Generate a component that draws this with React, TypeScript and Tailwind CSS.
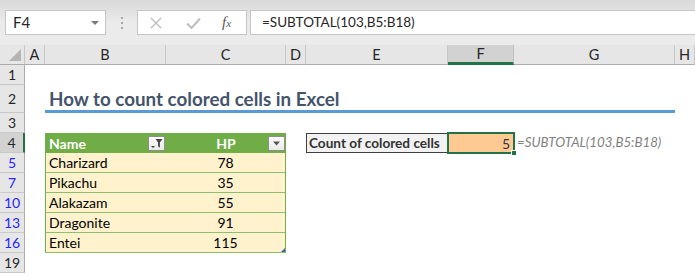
import clsx from 'clsx';

const ui = { fontFamily: 'Lato, "Liberation Sans", sans-serif' };
const cell = { fontFamily: 'Lato, "Liberation Sans", sans-serif' };

const pokemon = [
  { row: 5, name: 'Charizard', hp: 78 },
  { row: 7, name: 'Pikachu', hp: 35 },
  { row: 10, name: 'Alakazam', hp: 55 },
  { row: 13, name: 'Dragonite', hp: 91 },
  { row: 16, name: 'Entei', hp: 115 },
];

function RowHead({ n, blue, active }: { n: number; blue?: boolean; active?: boolean }) {
  return (
    <div
      className={clsx(
        'w-[25px] shrink-0 flex items-center justify-center border-b border-b-[#c9c9c9] text-[14px]',
        active ? 'bg-[#d2d2d2] border-r-2 border-r-[#217346]' : 'bg-[#e6e6e6] border-r border-r-[#ababab]',
        blue ? 'text-[#2525ff]' : 'text-[#262626]'
      )}
    >
      {n}
    </div>
  );
}

function ColHead({ label, width, active }: { label: string; width: string; active?: boolean }) {
  return (
    <div
      className={clsx(
        width,
        'shrink-0 flex items-center justify-center text-[14.5px] text-[#262626]',
        active
          ? 'bg-[#d2d2d2] border-b-[3px] border-b-[#217346] border-r border-r-[#c0c0c0]'
          : 'bg-[#e6e6e6] border-b border-b-[#ababab] border-r border-r-[#c6c6c6]'
      )}
    >
      {label}
    </div>
  );
}

function FilterButton({ filtered }: { filtered?: boolean }) {
  return (
    <div className="w-[17px] h-[15px] bg-gradient-to-b from-white to-[#e8e8e8] border border-[#8e8e8e] flex items-center justify-center">
      {filtered ? (
        <svg width="13" height="11" viewBox="0 0 13 11">
          <path d="M1 8h4l-2 2z" fill="#444" />
          <path d="M5.5 1h7l-2.6 3.4v5.2l-1.8 -1v-4.2z" fill="#444" />
        </svg>
      ) : (
        <svg width="9" height="5" viewBox="0 0 9 5">
          <path d="M1 0.5h7l-3.5 4z" fill="#555" />
        </svg>
      )}
    </div>
  );
}

export default function App() {
  return (
    <div className="w-[695px] h-[274px] bg-white overflow-hidden select-none">
      {/* formula bar */}
      <div className="h-[45px] bg-gradient-to-b from-[#d9d9d9] via-[#ebebeb] to-[#ebebeb] flex items-start pt-[10px] pl-[5px]" style={ui}>
        <div className="w-[101px] h-[25px] bg-white border border-[#c6c6c6] flex items-center justify-between pl-[7px] pr-[6px]">
          <span className="text-[15px] text-[#262626]">F4</span>
          <svg width="8" height="4" viewBox="0 0 8 4">
            <path d="M0 0h8l-4 4z" fill="#7a7a7a" />
          </svg>
        </div>
        <div className="w-[31px] h-[25px] flex flex-col items-center justify-center gap-[3px]">
          <span className="w-[2px] h-[2px] bg-[#a6a6a6]" />
          <span className="w-[2px] h-[2px] bg-[#a6a6a6]" />
          <span className="w-[2px] h-[2px] bg-[#a6a6a6]" />
        </div>
        <div className="w-[110px] h-[25px] bg-white border border-[#c6c6c6] flex items-center pl-[12px]">
          <svg width="12" height="12" viewBox="0 0 12 12">
            <path d="M1 1l10 10M11 1L1 11" stroke="#bdbdbd" strokeWidth="1.4" />
          </svg>
          <svg className="ml-[24px]" width="15" height="12" viewBox="0 0 15 12">
            <path d="M1 6.5l4.5 4.5L14 1.5" stroke="#bdbdbd" strokeWidth="2" fill="none" />
          </svg>
          <span className="ml-[21px] text-[15px] italic text-[#555]" style={{ fontFamily: '"Liberation Serif", serif' }}>
            f<span className="text-[11px]">x</span>
          </span>
        </div>
        <div className="w-[3px]" />
        <div className="flex-1 h-[25px] bg-white border border-[#c6c6c6] border-r-0 flex items-center pl-[11px]">
          <span className="text-[13.5px] text-[#262626]">=SUBTOTAL(103,B5:B18)</span>
        </div>
      </div>

      {/* column headers */}
      <div className="flex h-[20px]" style={cell}>
        <div className="w-[25px] shrink-0 bg-[#e6e6e6] border-b border-b-[#ababab] border-r border-r-[#c6c6c6] flex items-end justify-end p-[3px]">
          <svg width="12" height="12" viewBox="0 0 12 12">
            <path d="M12 0v12H0z" fill="#b4b4b4" />
          </svg>
        </div>
        <ColHead label="A" width="w-[20px]" />
        <ColHead label="B" width="w-[121px]" />
        <ColHead label="C" width="w-[120px]" />
        <ColHead label="D" width="w-[20px]" />
        <ColHead label="E" width="w-[142px]" />
        <ColHead label="F" width="w-[66px]" active />
        <ColHead label="G" width="w-[161px]" />
        <ColHead label="H" width="w-[20px]" />
      </div>

      <div style={cell} className="text-[14px] text-black">
        {/* row 1 */}
        <div className="flex h-[20px]">
          <RowHead n={1} />
        </div>

        {/* row 2: title */}
        <div className="flex h-[28px]">
          <RowHead n={2} />
          <div className="w-[20px] shrink-0" />
          <div className="w-[630px] shrink-0 border-b-[3px] border-b-[#5b9bd5] flex items-end pl-[4px] pb-[1px]">
            <span className="text-[18.8px] font-bold text-[#44546a] leading-none whitespace-nowrap">
              How to count colored cells in Excel
            </span>
          </div>
        </div>

        {/* row 3 */}
        <div className="flex h-[20px]">
          <RowHead n={3} />
        </div>

        {/* row 4: table header + count */}
        <div className="flex h-[20px]">
          <RowHead n={4} active />
          <div className="w-[20px] shrink-0" />
          <div className="w-[121px] shrink-0 bg-[#70ad47] flex items-center justify-between pl-[4px] pr-[1px]">
            <span className="font-bold text-white">Name</span>
            <FilterButton filtered />
          </div>
          <div className="w-[120px] shrink-0 bg-[#70ad47] flex items-center pr-[1px]">
            <span className="flex-1 text-center font-bold text-white pl-[18px]">HP</span>
            <FilterButton />
          </div>
          <div className="w-[20px] shrink-0" />
          <div className="w-[142px] shrink-0 bg-[#f2f2f2] border border-[#3f3f3f] flex items-center pl-[2px]">
            <span className="font-bold text-[#333] whitespace-nowrap text-[13.6px]">Count of colored cells</span>
          </div>
          <div className="relative w-[66px] shrink-0 bg-[#ffc993] flex items-center justify-end pr-[4px]">
            <span className="text-[#2f3447]">5</span>
            <div className="absolute -inset-[1px] border-2 border-[#217346]" />
            <div className="absolute -right-[3px] -bottom-[3px] w-[6px] h-[6px] bg-[#217346] border border-white" />
          </div>
          <div className="w-[161px] shrink-0 flex items-center pl-[3px]">
            <span className="italic text-[#7f7f7f] whitespace-nowrap text-[13.3px]">=SUBTOTAL(103,B5:B18)</span>
          </div>
        </div>

        {/* data rows */}
        {pokemon.map((p, i) => (
          <div key={p.row} className="flex h-[20px]">
            <RowHead n={p.row} blue />
            <div className="w-[20px] shrink-0" />
            <div className="w-[121px] shrink-0 bg-[#fff2cc] border-l border-l-[#70ad47] border-b border-b-[#8fbf6c] flex items-center pl-[3px]">
              {p.name}
            </div>
            <div className="relative w-[120px] shrink-0 bg-[#fff2cc] border-r border-r-[#70ad47] border-b border-b-[#8fbf6c] flex items-center justify-center">
              {p.hp}
              {i === pokemon.length - 1 && (
                <svg className="absolute right-0 bottom-0" width="4" height="4" viewBox="0 0 4 4">
                  <path d="M4 0v4H0z" fill="#3b5fc7" />
                </svg>
              )}
            </div>
          </div>
        ))}

        {/* row 19 */}
        <div className="flex h-[20px]">
          <RowHead n={19} />
        </div>
      </div>
    </div>
  );
}
